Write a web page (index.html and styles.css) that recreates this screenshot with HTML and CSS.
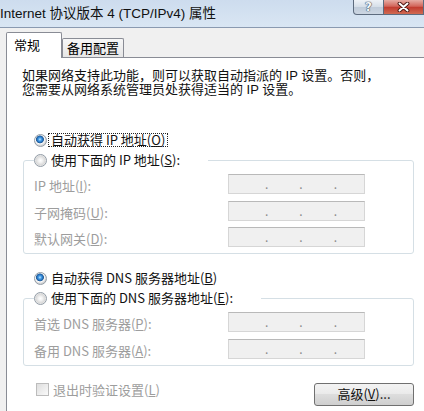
FILE: index.html
```html
<!DOCTYPE html>
<html lang="zh-CN">
<head>
<meta charset="utf-8">
<title>Internet 协议版本 4 (TCP/IPv4) 属性</title>
<link rel="stylesheet" href="styles.css">
</head>
<body>
<div class="window">
  <div class="titlebar">
    <span class="title">Internet 协议版本 4 (TCP/IPv4) 属性</span>
    <div class="caption">
      <span class="cbtn help">?</span>
      <span class="cbtn close"><svg width="13" height="10" viewBox="0 0 13 10"><path d="M2.5 1.5 L10.5 8.5 M10.5 1.5 L2.5 8.5" stroke="#4a1510" stroke-width="3.8" stroke-linecap="round"/><path d="M2.5 1.5 L10.5 8.5 M10.5 1.5 L2.5 8.5" stroke="#ffffff" stroke-width="2" stroke-linecap="round"/></svg></span>
    </div>
  </div>
  <div class="client">
    <div class="tabs">
      <div class="tab active">常规</div>
      <div class="tab">备用配置</div>
    </div>
    <div class="panel">
      <div class="intro">
        <div class="line">如果网络支持此功能，则可以获取自动指派的 IP 设置。否则，</div>
        <div class="line">您需要从网络系统管理员处获得适当的 IP 设置。</div>
      </div>

      <div class="radio-row first"><span class="radio checked"></span><span class="rlabel focus">自动获得 IP 地址(<u>O</u>)</span></div>
      <fieldset class="group">
        <legend><div class="radio-row"><span class="radio"></span><span class="rlabel">使用下面的 IP 地址(<u>S</u>):</span></div></legend>
        <div class="fields">
          <span class="flabel">IP 地址(<u>I</u>):</span><span class="ipbox"><i>.</i><i>.</i><i>.</i></span>
          <span class="flabel">子网掩码(<u>U</u>):</span><span class="ipbox"><i>.</i><i>.</i><i>.</i></span>
          <span class="flabel">默认网关(<u>D</u>):</span><span class="ipbox"><i>.</i><i>.</i><i>.</i></span>
        </div>
      </fieldset>

      <div class="radio-row second"><span class="radio checked"></span><span class="rlabel">自动获得 DNS 服务器地址(<u>B</u>)</span></div>
      <fieldset class="group dns">
        <legend><div class="radio-row"><span class="radio"></span><span class="rlabel">使用下面的 DNS 服务器地址(<u>E</u>):</span></div></legend>
        <div class="fields">
          <span class="flabel">首选 DNS 服务器(<u>P</u>):</span><span class="ipbox"><i>.</i><i>.</i><i>.</i></span>
          <span class="flabel">备用 DNS 服务器(<u>A</u>):</span><span class="ipbox"><i>.</i><i>.</i><i>.</i></span>
        </div>
      </fieldset>

      <div class="bottom-row">
        <span class="check"><span class="checkbox"></span><span class="clabel">退出时验证设置(<u>L</u>)</span></span>
        <button class="btn">高级(<u>V</u>)...</button>
      </div>
    </div>
  </div>
</div>
</body>
</html>
```
FILE: styles.css
```css
html, body {
  margin: 0;
  padding: 0;
}
body {
  width: 424px;
  height: 411px;
  overflow: hidden;
  background: #f0f0f0;
  font-family: "Noto Sans CJK SC", sans-serif;
  font-size: 13px;
  color: #000;
}
.window {
  width: 424px;
  height: 411px;
  overflow: hidden;
}
.titlebar {
  height: 27px;
  border-bottom: 1px solid #8a9ab0;
  background: linear-gradient(#cddcee, #d9e6f3);
  display: flex;
  align-items: flex-start;
}
.title {
  font-family: "Liberation Sans", "Noto Sans CJK SC", sans-serif;
  font-size: 13.5px;
  line-height: 27px;
  white-space: nowrap;
  color: #111;
}
.caption {
  margin-left: auto;
  display: flex;
}
.cbtn {
  height: 14px;
  display: flex;
  align-items: center;
  justify-content: center;
  border: 1px solid #5d6b7e;
  border-top: none;
}
.help {
  width: 29px;
  border-radius: 0 0 0 4px;
  background: linear-gradient(#eef2f7, #d5dee8 50%, #c0ccda 52%, #ccd6e2);
  color: #f4f7fa;
  font: bold 12px "DejaVu Sans", sans-serif;
  line-height: 14px;
  text-shadow: 0 0 1px #3d4c60, 0 0 1px #3d4c60, 0 0 1px #3d4c60;
}
.close {
  width: 39px;
  border-left: none;
  background: linear-gradient(#e6aca4, #d2655a 45%, #c23c30 52%, #d06a52);
}
.close svg {
  display: block;
}
.client {
  background: #f0f0f0;
}
.tabs {
  display: flex;
  align-items: flex-end;
  height: 29px;
  padding-left: 6px;
}
.tab {
  height: 18px;
  line-height: 18px;
  border: 1px solid #898c95;
  border-bottom: none;
  border-radius: 2px 2px 0 0;
  padding: 0 4px;
  background: linear-gradient(#f7f7f7, #e6e6e6);
  white-space: nowrap;
}
.tab.active {
  height: 25px;
  line-height: 24px;
  padding: 0 21px 0 7px;
  margin-bottom: -1px;
  background: #fff;
  position: relative;
  z-index: 1;
}
.panel {
  margin-left: 6px;
  border-left: 1px solid #898c95;
  border-top: 1px solid #898c95;
  background: #fff;
  padding: 11px 0 0 15px;
  height: 400px;
}
.intro {
  font-family: "Liberation Sans", "Noto Sans CJK SC", sans-serif;
  color: #111;
}
.intro .line {
  height: 13.5px;
  line-height: 13.5px;
  white-space: nowrap;
}
.radio-row {
  display: flex;
  align-items: center;
  height: 20px;
  gap: 2px;
  color: #111;
}
.radio-row.first {
  margin: 34px 0 0 12px;
}
.radio-row.second {
  margin: 14px 0 0 12px;
}
.radio {
  width: 13px;
  height: 13px;
  box-sizing: border-box;
  border-radius: 50%;
  border: 1px solid #929ca6;
  background: radial-gradient(circle at 50% 50%, #ffffff 0, #f2f2f2 2px, #d9d9d9 4.5px, #eeeeee 5.5px);
  flex: none;
}
.radio.checked {
  background: radial-gradient(circle at 45% 40%, #c4e8ff 0, #4ea3ea 1.4px, #1f6cb9 3px, #2a5d93 3.6px, #ffffff 4.3px, #ececec 5px, #d4d4d4 6px);
}
.rlabel {
  padding: 0 2px;
  line-height: 12px;
  white-space: nowrap;
}
.rlabel.focus {
  outline: 1px dotted #222;
}
.group {
  margin: 0 0 0 1px;
  padding: 4px 0 6px 10px;
  border: 1px solid #d5dfe5;
  border-radius: 3px;
  width: 391px;
  box-sizing: border-box;
  min-width: 0;
}
.group legend {
  padding: 0 26px 0 0;
  margin: 0;
}
.fields {
  display: grid;
  grid-template-columns: 194px 137px;
  row-gap: 6.5px;
}
.flabel {
  color: #9d9d9d;
  padding-top: 5px;
  line-height: 14px;
  white-space: nowrap;
}
.ipbox {
  height: 20px;
  box-sizing: border-box;
  border: 1px solid #d6d6d6;
  border-top-color: #b9b9b9;
  background: #f0f0f0;
  display: flex;
  align-items: flex-end;
  gap: 31px;
  padding: 0 0 3px 36px;
  font-size: 12px;
  line-height: 12px;
  color: #8a8a8a;
}
.ipbox i {
  font-style: normal;
}
.bottom-row {
  display: flex;
  justify-content: space-between;
  align-items: flex-start;
  width: 378px;
  margin: 17px 0 0 14px;
}
.check {
  display: flex;
  align-items: center;
  gap: 4px;
  color: #9d9d9d;
  line-height: 14px;
  white-space: nowrap;
}
.checkbox {
  width: 13px;
  height: 13px;
  box-sizing: border-box;
  border: 1px solid #bcbcbc;
  background: linear-gradient(135deg, #dedede, #fafafa);
}
.btn {
  width: 100px;
  height: 23px;
  border: 1px solid #707070;
  border-radius: 3px;
  background: linear-gradient(#f3f3f3, #ebebeb 45%, #dddddd 50%, #cfcfcf);
  font: 13px "Noto Sans CJK SC", sans-serif;
  color: #111;
  padding: 0;
  line-height: 20px;
}
```
